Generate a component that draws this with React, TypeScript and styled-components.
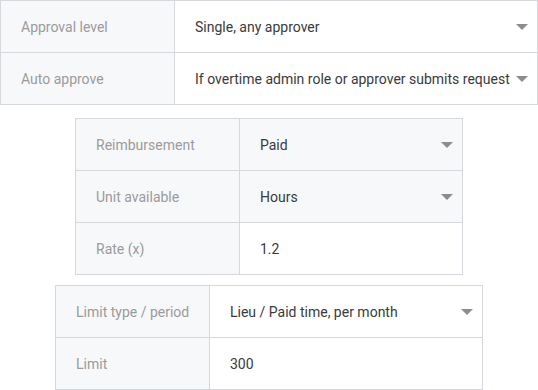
import React from "react";
import styled, { createGlobalStyle } from "styled-components";

const Global = createGlobalStyle`
  html, body { margin: 0; padding: 0; background: #ffffff; }
  body { font-family: Roboto, "Liberation Sans", Arial, sans-serif; }
`;

const Page = styled.div`
  width: 538px;
  display: flex;
  flex-direction: column;
  align-items: center;
`;

const Table = styled.div<{ $width: number; $label: number; $top: number }>`
  width: ${(p) => p.$width}px;
  box-sizing: border-box;
  margin-top: ${(p) => p.$top}px;
  display: grid;
  grid-template-columns: ${(p) => p.$label}px 1fr;
  grid-auto-rows: 51px;
  gap: 1px;
  padding: 1px;
  background: #d5d8dd;
`;

const Label = styled.div`
  background: #f7f8fa;
  display: flex;
  align-items: center;
  padding-left: 20px;
  font-size: 14px;
  color: #9b9b9b;
  white-space: nowrap;
`;

const Value = styled.div<{ $shaded?: boolean }>`
  background: ${(p) => (p.$shaded ? "#f7f8fa" : "#ffffff")};
  display: flex;
  align-items: center;
  padding-left: 20px;
  padding-right: 9px;
  font-size: 14px;
  color: #3a3a3a;
  white-space: nowrap;
  min-width: 0;
`;

const ValueText = styled.span`
  flex: 1;
  min-width: 0;
`;

const Caret = styled.svg`
  width: 12px;
  height: 6px;
  flex: none;
  margin-left: 4px;
`;

const Arrow = () => (
  <Caret viewBox="0 0 12 6">
    <path d="M0 0 L12 0 L6 6 Z" fill="#8c8c8c" />
  </Caret>
);

type Row = { label: string; value: string; select?: boolean; shaded?: boolean };

const Rows = ({ rows }: { rows: Row[] }) => (
  <>
    {rows.map((r) => (
      <React.Fragment key={r.label}>
        <Label>{r.label}</Label>
        <Value $shaded={r.shaded}>
          <ValueText>{r.value}</ValueText>
          {r.select && <Arrow />}
        </Value>
      </React.Fragment>
    ))}
  </>
);

export default function App() {
  return (
    <Page>
      <Global />
      <Table $width={538} $label={173} $top={0}>
        <Rows
          rows={[
            { label: "Approval level", value: "Single, any approver", select: true },
            {
              label: "Auto approve",
              value: "If overtime admin role or approver submits request",
              select: true,
            },
          ]}
        />
      </Table>
      <Table $width={388} $label={163} $top={13}>
        <Rows
          rows={[
            { label: "Reimbursement", value: "Paid", select: true, shaded: true },
            { label: "Unit available", value: "Hours", select: true, shaded: true },
            { label: "Rate (x)", value: "1.2" },
          ]}
        />
      </Table>
      <Table $width={428} $label={153} $top={10}>
        <Rows
          rows={[
            { label: "Limit type / period", value: "Lieu / Paid time, per month", select: true },
            { label: "Limit", value: "300" },
          ]}
        />
      </Table>
    </Page>
  );
}
